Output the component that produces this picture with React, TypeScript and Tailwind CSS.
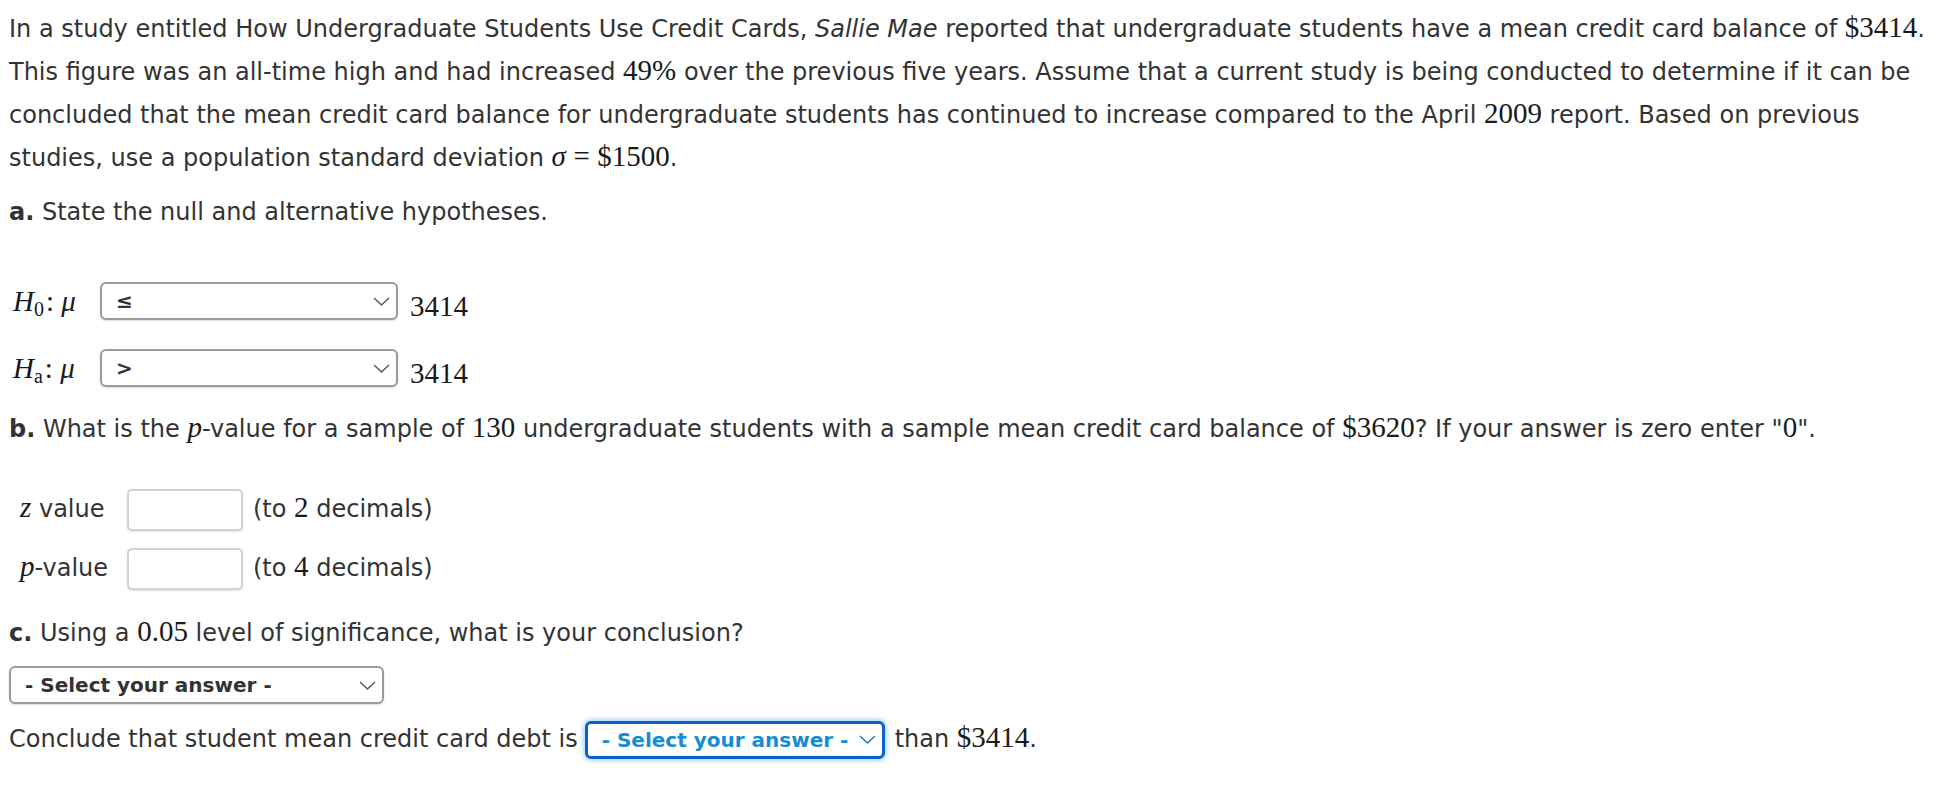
import React from 'react';

const serif = "font-['Liberation_Serif',serif]";

function M({ children, italic = false }: { children: React.ReactNode; italic?: boolean }) {
  return (
    <span className={`${serif} text-[29px] leading-none text-[#1a1a1a] ${italic ? 'italic' : ''}`}>{children}</span>
  );
}

function Chevron({ color = '#555' }: { color?: string }) {
  return (
    <svg width="17" height="9" viewBox="0 0 17 9" fill="none">
      <polyline points="1,1 8.5,8 16,1" stroke={color} strokeWidth="1.4" strokeLinejoin="round" />
    </svg>
  );
}

function Dropdown({ value, width }: { value: string; width: string }) {
  return (
    <div
      className={`${width} h-[38px] flex items-center justify-between pl-[14px] pr-[6px] border-2 border-[#9a9a9a] rounded-[6px] bg-white shadow-[0_1px_2px_rgba(0,0,0,0.15)]`}
    >
      <span className="text-[20px] leading-none font-bold text-[#333]">{value}</span>
      <Chevron />
    </div>
  );
}

function AnswerBox() {
  return (
    <div className="w-[116px] h-[42px] border-2 border-[#d2d2d2] rounded-[5px] bg-white shadow-[0_1px_2px_rgba(0,0,0,0.12)]" />
  );
}

function Hypothesis({ sub, sign }: { sub: string; sign: string }) {
  return (
    <div className="ml-[4px] h-[38px] flex items-center">
      <span className={`${serif} text-[29px] leading-none text-[#1a1a1a] w-[87px]`}>
        <i>H</i>
        <sub className="text-[20px]">{sub}</sub>
        <span className="ml-[2px]">:</span> <i>μ</i>
      </span>
      <Dropdown value={sign} width="w-[298px]" />
      <span className={`${serif} text-[29px] leading-none text-[#1a1a1a] ml-[12px] mt-[10px]`}>3414</span>
    </div>
  );
}

export default function App() {
  return (
    <div className="min-h-screen bg-white px-[9px] pt-[8px] text-[24px] leading-[43px] text-[#333] font-['DejaVu_Sans',sans-serif]">
      {/* Problem statement */}
      <p>
        In a study entitled How Undergraduate Students Use Credit Cards, <i>Sallie Mae</i> reported that
        undergraduate students have a mean credit card balance of <M>$3414</M>.
        This figure was an all-time high and had increased <M>49%</M> over the previous five years. Assume
        that a current study is being conducted to determine if it can be concluded that the mean credit card
        balance for undergraduate students has continued to increase compared to the April <M>2009</M> report.
        Based on previous studies, use a population standard deviation <M italic>σ</M> <M>= $1500</M>.
      </p>

      {/* Part a */}
      <p className="mt-[11px]">
        <b>a.</b> State the null and alternative hypotheses.
      </p>

      <div className="mt-[48px]">
        <Hypothesis sub="0" sign="≤" />
      </div>
      <div className="mt-[29px]">
        <Hypothesis sub="a" sign=">" />
      </div>

      {/* Part b */}
      <p className="mt-[21px]">
        <b>b.</b> What is the <M italic>p</M>-value for a sample of <M>130</M> undergraduate students with a
        sample mean credit card balance of <M>$3620</M>? If your answer is zero enter "<M>0</M>".
      </p>

      <div className="mt-[37px] ml-[11px] flex items-center">
        <span className="w-[107px]">
          <M italic>z</M> value
        </span>
        <AnswerBox />
        <span className="ml-[10px]">
          (to <M>2</M> decimals)
        </span>
      </div>

      <div className="mt-[16px] ml-[11px] flex items-center">
        <span className="w-[107px]">
          <M italic>p</M>-value
        </span>
        <AnswerBox />
        <span className="ml-[10px]">
          (to <M>4</M> decimals)
        </span>
      </div>

      {/* Part c */}
      <p className="mt-[22px]">
        <b>c.</b> Using a <M>0.05</M> level of significance, what is your conclusion?
      </p>

      <div className="mt-[11px]">
        <Dropdown value="- Select your answer -" width="w-[375px]" />
      </div>

      <div className="mt-[14px] flex items-center">
        <span>Conclude that student mean credit card debt is</span>
        <div className="ml-[7px] w-[300px] h-[38px] flex items-center justify-between pl-[14px] pr-[6px] border-[3px] border-[#0b63c9] rounded-[6px] bg-white shadow-[0_0_4px_2px_rgba(120,180,240,0.55)]">
          <span className="text-[20px] leading-none font-bold text-[#168dd2]">- Select your answer -</span>
          <Chevron color="#1a73c8" />
        </div>
        <span className="ml-[10px]">
          than <M>$3414</M>.
        </span>
      </div>
    </div>
  );
}
